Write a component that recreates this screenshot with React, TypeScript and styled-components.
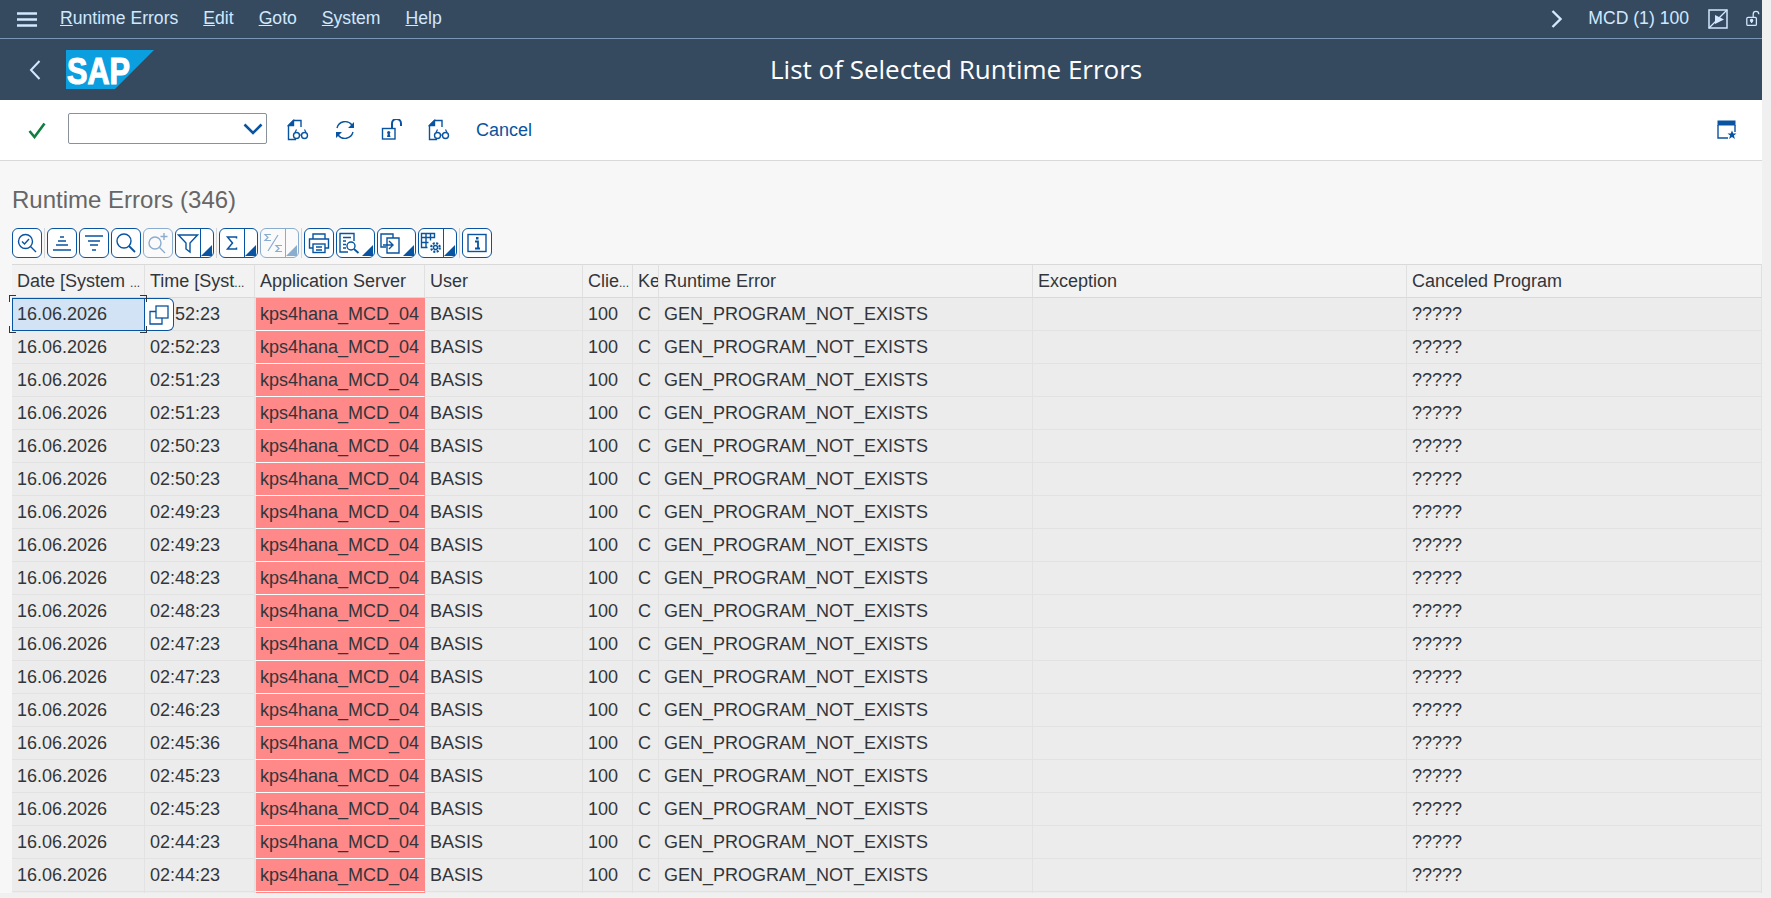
import React from "react"
import styled, { createGlobalStyle } from "styled-components"

const GlobalStyle = createGlobalStyle`
  html, body {
    margin: 0;
    height: 100%;
    overflow: hidden;
    background: #f0f0f0;
    font-family: "Liberation Sans", Arial, sans-serif;
  }
`

const BLUE = "#0854a0"
const SHELL_TEXT = "#d1e8ff"

const TIMES = [
  "02:52:23", "02:52:23", "02:51:23", "02:51:23", "02:50:23", "02:50:23",
  "02:49:23", "02:49:23", "02:48:23", "02:48:23", "02:47:23", "02:47:23",
  "02:46:23", "02:45:36", "02:45:23", "02:45:23", "02:44:23", "02:44:23", "02:43:23",
]

const COLUMNS = [
  { label: "Date [System ", cut: true, width: 133 },
  { label: "Time [Syst", cut: true, width: 110 },
  { label: "Application Server", width: 170 },
  { label: "User", width: 158 },
  { label: "Clie", cut: true, width: 50 },
  { label: "Ke", width: 26 },
  { label: "Runtime Error", width: 374 },
  { label: "Exception", width: 374 },
  { label: "Canceled Program", width: 355 },
]

const MENUS = [
  { key: "R", rest: "untime Errors" },
  { key: "E", rest: "dit" },
  { key: "G", rest: "oto" },
  { key: "S", rest: "ystem" },
  { key: "H", rest: "elp" },
]

const Glyph: React.FC<{ size?: number; children: React.ReactNode }> = ({ size = 22, children }) => (
  <svg width={size} height={size} viewBox="0 0 22 22" fill="none" stroke="currentColor" strokeWidth="1.4">
    {children}
  </svg>
)

const DocGlasses = () => (
  <Glyph>
    <path d="M14 8V1.500H6.500L1.500 6.500V20.500H9" />
    <path d="M1.500 6.500L6.500 1.500V6.500z" fill="currentColor" />
    <circle cx="9.500" cy="16.500" r="3" />
    <circle cx="17.500" cy="16.500" r="3" />
    <path d="M12.500 16h2M8 13.500l1.500-3M19 13.500l-1.500-3" strokeWidth="1.200" />
  </Glyph>
)

export default function App() {
  return (
    <>
      <GlobalStyle />
      <Shell>
        <MenuBar>
          <Hamburger>
            <svg width="20" height="15" viewBox="0 0 20 15">
              <path d="M0 1.500h20M0 7.500h20M0 13.500h20" stroke={SHELL_TEXT} strokeWidth="2.600" />
            </svg>
          </Hamburger>
          <MenuList>
            {MENUS.map((m) => (
              <MenuItem key={m.key}>
                <u>{m.key}</u>
                {m.rest}
              </MenuItem>
            ))}
          </MenuList>
          <SystemArea>
            <svg width="11" height="18" viewBox="0 0 11 18" fill="none">
              <path d="M1.500 1l8 8-8 8" stroke={SHELL_TEXT} strokeWidth="2.400" />
            </svg>
            <SystemText>MCD (1) 100</SystemText>
            <svg width="20" height="20" viewBox="0 0 20 20" fill="none" stroke={SHELL_TEXT}>
              <rect x="1" y="1" width="18" height="18" strokeWidth="1.500" />
              <path d="M1 19L19 1" strokeWidth="1.200" />
              <path d="M7 6l9 4.500-9 4.500z" fill={SHELL_TEXT} strokeWidth="0" />
            </svg>
            <ClippedLock>
              <svg width="20" height="20" viewBox="0 0 20 20" fill="none" stroke={SHELL_TEXT} strokeWidth="1.600">
                <rect x="1" y="8" width="12" height="10" rx="1.500" />
                <path d="M9 8V4a3.500 3.500 0 0 1 7 0" />
                <circle cx="7" cy="12" r="1.400" fill={SHELL_TEXT} />
                <path d="M7 12v3" />
              </svg>
            </ClippedLock>
          </SystemArea>
        </MenuBar>

        <TitleBar>
          <BackArrow>
            <svg width="12" height="20" viewBox="0 0 12 20" fill="none">
              <path d="M10.500 1L2 10l8.500 9" stroke={SHELL_TEXT} strokeWidth="2" />
            </svg>
          </BackArrow>
          <svg width="88" height="39" viewBox="0 0 88 39">
            <polygon points="0,0 88,0 49,39 0,39" fill="#0b9fe0" />
            <text
              x="1"
              y="34"
              fill="#fff"
              stroke="#fff"
              strokeWidth="1.200"
              fontFamily="Liberation Sans"
              fontWeight="700"
              fontSize="36"
              textLength="63"
              lengthAdjust="spacingAndGlyphs"
            >
              SAP
            </text>
          </svg>
          <PageTitle>List of Selected Runtime Errors</PageTitle>
        </TitleBar>

        <ActionBar>
          <CheckMark>
            <svg width="18" height="17" viewBox="0 0 18 17" fill="none">
              <path d="M1.500 9l5 6L16.500 1.500" stroke="#107e3e" strokeWidth="2.600" />
            </svg>
          </CheckMark>
          <CommandBox>
            <svg width="20" height="12" viewBox="0 0 20 12" fill="none">
              <path d="M1.500 1.500L10 10l8.500-8.500" stroke={BLUE} strokeWidth="2.600" />
            </svg>
          </CommandBox>
          <ActionIcons>
            <DocGlasses />
            <Glyph>
              <path d="M3 9a8.500 8.500 0 0 1 15-3M19 13a8.500 8.500 0 0 1-15 3" />
              <path d="M20 3v6h-6zM2 19v-6h6z" fill="currentColor" strokeWidth="0" />
            </Glyph>
            <Glyph>
              <rect x="1.500" y="9.500" width="12.500" height="10.500" />
              <path d="M11 9V4.500a4.500 4.500 0 0 1 9 0V7" strokeWidth="2" />
              <circle cx="7.700" cy="13.500" r="1.600" fill="currentColor" strokeWidth="0" />
              <path d="M6 18l1-4h1.500l1 4z" fill="currentColor" strokeWidth="0" />
            </Glyph>
            <DocGlasses />
            <CancelLabel>Cancel</CancelLabel>
          </ActionIcons>
          <ActionEnd>
            <svg width="20" height="20" viewBox="0 0 20 20" fill="none">
              <path d="M1 5v13h10M18 5v7" stroke={BLUE} strokeWidth="1.400" />
              <rect x="0.500" y="0.500" width="18" height="5" fill={BLUE} />
              <path d="M15 10.500l1.300 3h3.200l-2.600 2 1 3.500-2.900-2-2.900 2 1-3.500-2.600-2h3.200z" fill={BLUE} />
            </svg>
          </ActionEnd>
        </ActionBar>

        <Content>
          <Heading>Runtime Errors (346)</Heading>
          <GridToolbar>
            <ToolButton>
              <Glyph>
                <circle cx="9.500" cy="9.500" r="7" />
                <path d="M6 9.500l2.500 2.500 4.500-5M14.500 14.500l5.500 5.500" />
              </Glyph>
            </ToolButton>
            <ToolDivider />
            <ToolButton>
              <Glyph>
                <path d="M9 5h4M7 9h8M5 13h12M2 18h18" />
              </Glyph>
            </ToolButton>
            <ToolButton>
              <Glyph>
                <path d="M2 4h18M5 9h12M7 13h8M9 18h4" />
              </Glyph>
            </ToolButton>
            <ToolButton>
              <Glyph>
                <circle cx="9" cy="9" r="7" />
                <path d="M14 14l6 6" strokeWidth="1.800" />
              </Glyph>
            </ToolButton>
            <ToolButton $disabled>
              <Glyph>
                <circle cx="8" cy="11" r="6" />
                <path d="M12.500 15.500l5.500 5.500M17 1v7M13.500 4.500h7" />
              </Glyph>
            </ToolButton>
            <ToolButton $menu="split">
              <Glyph>
                <path d="M1.500 3h19l-7.500 8v9l-4-3v-6z" />
              </Glyph>
            </ToolButton>
            <ToolDivider />
            <ToolButton $menu="split">
              <Glyph>
                <path d="M15.500 6.500V5H6.500l5 6-5 6h9v-1.500" strokeWidth="1.500" />
              </Glyph>
            </ToolButton>
            <ToolButton $menu="split" $disabled>
              <Glyph>
                <path d="M9 2.500H3l3 3-3 3h6M20 13.500h-6l3 3-3 3h6M16 3L6 19" strokeWidth="1.200" />
              </Glyph>
            </ToolButton>
            <ToolDivider />
            <ToolButton>
              <Glyph>
                <path d="M5 7V2h12v5M5 16H1.500V7h19v9H17" />
                <rect x="5" y="12" width="12" height="8.500" />
                <path d="M8 15h6M8 18h6" />
              </Glyph>
            </ToolButton>
            <ToolButton $menu="corner">
              <Glyph>
                <path d="M10 20H2V1.500h14V9" />
                <path d="M5 5.500h8M5 9h3M5 12.500h3M5 16h3" />
                <circle cx="13" cy="14" r="4" />
                <path d="M16 17l4.500 4" strokeWidth="1.800" />
              </Glyph>
            </ToolButton>
            <ToolButton $menu="corner">
              <Glyph>
                <path d="M7 15H2V2h12v4" />
                <path d="M8 6h12v15H8z" />
                <path d="M4 13h9M10 9l4 4-4 4" />
              </Glyph>
            </ToolButton>
            <ToolButton $menu="split">
              <Glyph>
                <path d="M1.500 1.500h13v4h-13zM1.500 5.500v10h6M6 1.500v14M10.500 1.500v7M1.500 10.500h7" />
                <circle cx="15.500" cy="15.500" r="2" />
                <circle cx="15.500" cy="15.500" r="4.300" strokeWidth="2.200" strokeDasharray="2 1.400" />
              </Glyph>
            </ToolButton>
            <ToolDivider />
            <ToolButton>
              <Glyph>
                <rect x="2" y="2.500" width="18" height="17" />
                <path d="M9 9.500h3v7M9 16.500h5" strokeWidth="1.800" />
                <path d="M10 5h2.500v2.500H10z" fill="currentColor" strokeWidth="0" />
              </Glyph>
            </ToolButton>
          </GridToolbar>

          <TableClip>
            <Grid>
              <colgroup>
                {COLUMNS.map((c) => (
                  <col key={c.label} style={{ width: c.width }} />
                ))}
              </colgroup>
              <thead>
                <tr>
                  {COLUMNS.map((c) => (
                    <HeadCell key={c.label}>
                      {c.label}
                      {c.cut && <Dots>...</Dots>}
                    </HeadCell>
                  ))}
                </tr>
              </thead>
              <tbody>
                {TIMES.map((time, i) => (
                  <tr key={i}>
                    <Cell $selected={i === 0}>
                      16.06.2026
                      {i === 0 && (
                        <>
                          <FocusCorner $v="top" $h="left" />
                          <FocusCorner $v="top" $h="right" />
                          <FocusCorner $v="bottom" $h="left" />
                          <FocusCorner $v="bottom" $h="right" />
                          <CopyButton>
                            <svg width="20" height="20" viewBox="0 0 20 20" fill="none" stroke={BLUE} strokeWidth="1.300">
                              <rect x="7" y="1" width="12" height="12" />
                              <path d="M7 6.500H1V19h12v-6" />
                            </svg>
                          </CopyButton>
                        </>
                      )}
                    </Cell>
                    <Cell>{time}</Cell>
                    <Cell $alert>kps4hana_MCD_04</Cell>
                    <Cell>BASIS</Cell>
                    <Cell>100</Cell>
                    <Cell>C</Cell>
                    <Cell>GEN_PROGRAM_NOT_EXISTS</Cell>
                    <Cell />
                    <Cell>?????</Cell>
                  </tr>
                ))}
              </tbody>
            </Grid>
          </TableClip>
        </Content>
      </Shell>
    </>
  )
}

const Shell = styled.div`
  width: 1762px;
  height: 898px;
  padding-bottom: 5px;
  box-sizing: border-box;
  display: flex;
  flex-direction: column;
  overflow: hidden;
`

const MenuBar = styled.div`
  height: 38px;
  flex: none;
  display: flex;
  align-items: center;
  background: #354a5f;
  border-bottom: 1px solid #7996b4;
  color: ${SHELL_TEXT};
`

const Hamburger = styled.div`
  width: 60px;
  padding-left: 17px;
  box-sizing: border-box;
  display: flex;
`

const MenuList = styled.div`
  display: flex;
  gap: 25px;
  margin-top: -2px;
`

const MenuItem = styled.span`
  font-size: 17.6px;
`

const SystemArea = styled.div`
  margin-left: auto;
  display: flex;
  align-items: center;
`

const SystemText = styled.span`
  font-size: 17.6px;
  margin: -2px 19px 0 26px;
`

const ClippedLock = styled.div`
  width: 16px;
  margin-left: 18px;
  overflow: hidden;
  display: flex;
`

const TitleBar = styled.div`
  height: 61px;
  flex: none;
  display: flex;
  align-items: center;
  background: #354a5f;
  padding-left: 66px;
  position: relative;
`

const BackArrow = styled.div`
  position: absolute;
  left: 29px;
  top: 21px;
  display: flex;
`

const PageTitle = styled.h1`
  margin: -2px 0 0 616px;
  font-family: "Open Sans", sans-serif;
  font-size: 26px;
  font-weight: 400;
  color: #fff;
`

const ActionBar = styled.div`
  height: 60px;
  flex: none;
  display: flex;
  align-items: center;
  background: #fff;
  border-bottom: 1px solid #d9d9d9;
  padding-left: 28px;
  color: ${BLUE};
`

const CheckMark = styled.div`
  display: flex;
  width: 40px;
`

const CommandBox = styled.div`
  width: 199px;
  height: 31px;
  margin-top: -3px;
  box-sizing: border-box;
  border: 1px solid #89919a;
  border-radius: 2px;
  display: flex;
  align-items: center;
  justify-content: flex-end;
  padding-right: 3px;
`

const ActionIcons = styled.div`
  display: flex;
  align-items: center;
  gap: 25px;
  margin-left: 20px;
`

const CancelLabel = styled.span`
  font-size: 18px;
  margin-left: 1px;
`

const ActionEnd = styled.div`
  margin-left: auto;
  margin-right: 25px;
  display: flex;
`

const Content = styled.main`
  flex: 1;
  min-height: 0;
  padding-left: 12px;
  background: #f7f7f7;
  display: flex;
  flex-direction: column;
`

const Heading = styled.h2`
  margin: 26px 0 15px;
  height: 26px;
  line-height: 26px;
  font-size: 24px;
  font-weight: 400;
  color: #666;
`

const GridToolbar = styled.div`
  height: 30px;
  flex: none;
  display: flex;
  align-items: center;
  gap: 2px;
  margin-bottom: 6px;
  color: ${BLUE};
`

const ToolDivider = styled.span`
  width: 1px;
  height: 30px;
  background: #d4d4d4;
`

const ToolButton = styled.button<{ $menu?: "split" | "corner"; $disabled?: boolean }>`
  position: relative;
  width: ${(p) => (p.$menu ? "39px" : "30px")};
  height: 30px;
  padding: 0 ${(p) => (p.$menu ? "13px" : "0")} 0 0;
  box-sizing: border-box;
  display: flex;
  align-items: center;
  justify-content: center;
  border: 1px solid ${BLUE};
  border-radius: 6px;
  background: #fff;
  color: ${BLUE};
  opacity: ${(p) => (p.$disabled ? 0.45 : 1)};

  &::before {
    content: "";
    display: ${(p) => (p.$menu === "split" ? "block" : "none")};
    position: absolute;
    right: 12px;
    top: 0;
    bottom: 0;
    width: 1px;
    background: ${BLUE};
  }

  &::after {
    content: "";
    display: ${(p) => (p.$menu ? "block" : "none")};
    position: absolute;
    right: 1px;
    bottom: 1px;
    border-style: solid;
    border-width: 0 0 11px 11px;
    border-color: transparent transparent ${BLUE} transparent;
  }
`

const TableClip = styled.div`
  flex: 1;
  min-height: 0;
  margin-left: -4px;
  padding-left: 4px;
  overflow: hidden;
`

const Grid = styled.table`
  width: 1750px;
  table-layout: fixed;
  border-collapse: separate;
  border-spacing: 0;
  color: #32363a;
  font-size: 18px;
`

const HeadCell = styled.th`
  height: 34px;
  padding: 0 0 0 5px;
  box-sizing: border-box;
  text-align: left;
  font-weight: 400;
  white-space: nowrap;
  overflow: hidden;
  background: #f2f2f2;
  border-top: 1px solid #d9d9d9;
  border-bottom: 1px solid #d9d9d9;
  border-right: 1px solid #e0e0e0;
`

const Dots = styled.span`
  font-size: 12px;
`

const Cell = styled.td<{ $alert?: boolean; $selected?: boolean }>`
  position: relative;
  height: 33px;
  padding: 0 0 0 ${(p) => (p.$alert ? "4px" : "5px")};
  box-sizing: border-box;
  white-space: nowrap;
  background: ${(p) => (p.$alert ? "#ff8888" : p.$selected ? "#d1e3f4" : "#ececec")};
  border-bottom: 1px solid ${(p) => (p.$alert ? "#fff" : "#e2e2e2")};
  border-right: 1px solid ${(p) => (p.$alert ? "#ff8888" : "#e2e2e2")};
  border-left: ${(p) => (p.$alert ? "1px solid #e2e2e2" : "none")};
  outline: ${(p) => (p.$selected ? `1px solid ${BLUE}` : "none")};
  outline-offset: -1px;
`

const FocusCorner = styled.i<{ $v: "top" | "bottom"; $h: "left" | "right" }>`
  position: absolute;
  z-index: 3;
  width: 6px;
  height: 6px;
  ${(p) => p.$v}: -3px;
  ${(p) => p.$h}: -3px;
  border-${(p) => p.$v}: 1px solid #32363a;
  border-${(p) => p.$h}: 1px solid #32363a;
`

const CopyButton = styled.span`
  position: absolute;
  left: 100%;
  top: 0;
  width: 29px;
  height: 33px;
  margin-left: 1px;
  box-sizing: border-box;
  z-index: 2;
  display: flex;
  align-items: center;
  justify-content: center;
  background: #fff;
  border: 1px solid ${BLUE};
  border-left: none;
  border-radius: 0 6px 6px 0;
`
